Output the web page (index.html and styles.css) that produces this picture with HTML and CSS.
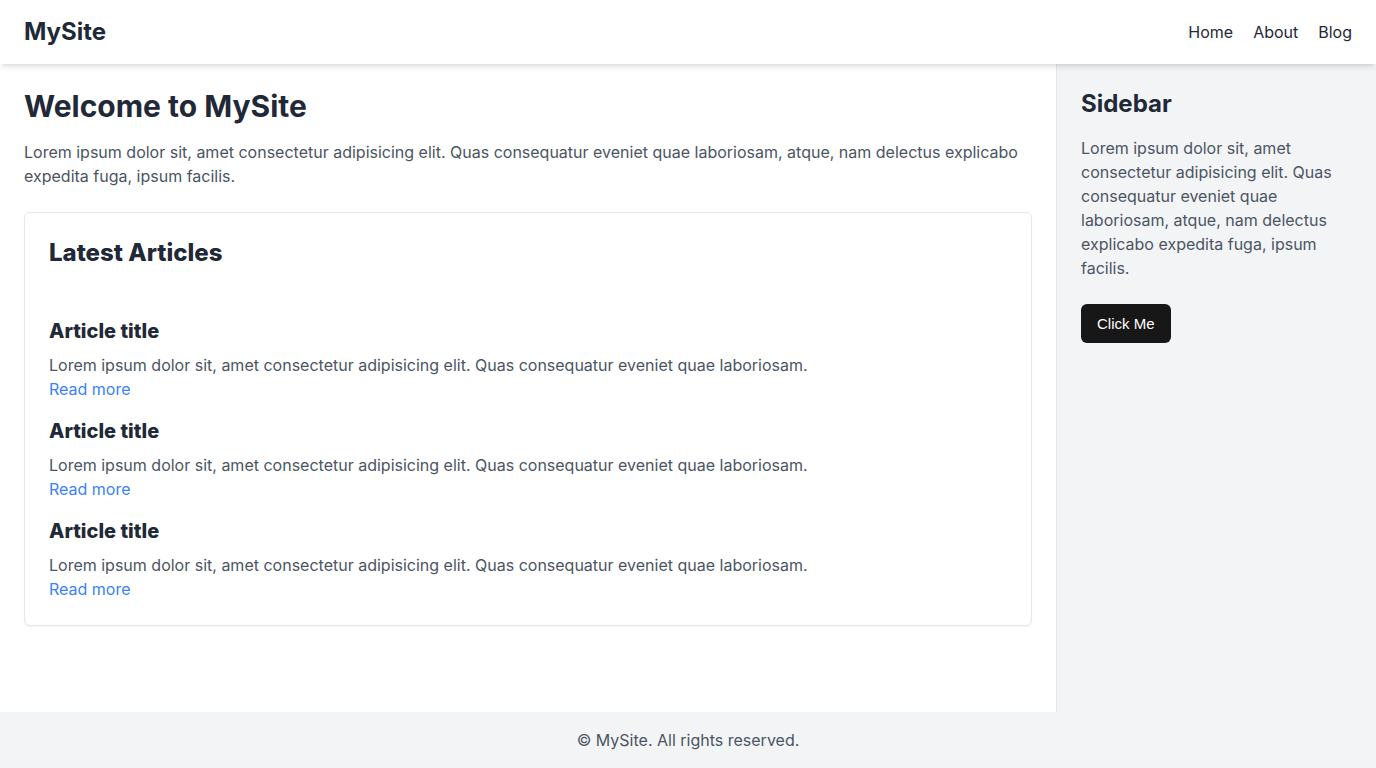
FILE: index.html
```html
<!DOCTYPE html>
<html lang="en">
<head>
<meta charset="utf-8">
<title>MySite</title>
<link rel="stylesheet" href="styles.css">
</head>
<body>
<header class="site-header">
  <div class="logo">MySite</div>
  <nav class="nav">
    <a href="#">Home</a>
    <a href="#">About</a>
    <a href="#">Blog</a>
  </nav>
</header>
<div class="layout">
  <main class="main">
    <h1 class="page-title">Welcome to MySite</h1>
    <p class="lead">Lorem ipsum dolor sit, amet consectetur adipisicing elit. Quas consequatur eveniet quae laboriosam, atque, nam delectus explicabo expedita fuga, ipsum facilis.</p>
    <section class="card">
      <h2 class="card-title">Latest Articles</h2>
      <div class="articles">
        <article class="article">
          <h3 class="article-title">Article title</h3>
          <p class="article-text">Lorem ipsum dolor sit, amet consectetur adipisicing elit. Quas consequatur eveniet quae laboriosam.</p>
          <a class="read-more" href="#">Read more</a>
        </article>
        <article class="article">
          <h3 class="article-title">Article title</h3>
          <p class="article-text">Lorem ipsum dolor sit, amet consectetur adipisicing elit. Quas consequatur eveniet quae laboriosam.</p>
          <a class="read-more" href="#">Read more</a>
        </article>
        <article class="article">
          <h3 class="article-title">Article title</h3>
          <p class="article-text">Lorem ipsum dolor sit, amet consectetur adipisicing elit. Quas consequatur eveniet quae laboriosam.</p>
          <a class="read-more" href="#">Read more</a>
        </article>
      </div>
    </section>
  </main>
  <aside class="sidebar">
    <h2 class="sidebar-title">Sidebar</h2>
    <p class="sidebar-text">Lorem ipsum dolor sit, amet consectetur adipisicing elit. Quas consequatur eveniet quae laboriosam, atque, nam delectus explicabo expedita fuga, ipsum facilis.</p>
    <button class="btn" type="button">Click Me</button>
  </aside>
</div>
<footer class="site-footer">© MySite. All rights reserved.</footer>
</body>
</html>
```
FILE: styles.css
```css
* { box-sizing: border-box; }
html, body { margin: 0; padding: 0; }
body {
  font-family: Inter, "Noto Sans", sans-serif;
  font-size: 16px;
  line-height: 24px;
  color: #1f2937;
  background: #ffffff;
  min-height: 100vh;
  display: flex;
  flex-direction: column;
}
h1, h2, h3, p { margin: 0; }
a { text-decoration: none; }

.site-header {
  height: 64px;
  padding: 0 24px;
  display: flex;
  align-items: center;
  justify-content: space-between;
  background: #ffffff;
  box-shadow: 0 4px 6px -1px rgba(0,0,0,0.1), 0 2px 4px -2px rgba(0,0,0,0.1);
  position: relative;
  z-index: 2;
}
.logo {
  font-size: 24px;
  line-height: 32px;
  font-weight: 700;
  color: #1f2937;
}
.nav { display: flex; gap: 20px; }
.nav a { color: #1f2937; font-size: 16px; line-height: 24px; }

.layout {
  flex: 1;
  display: flex;
}
.main {
  flex: 1;
  padding: 24px;
}
.page-title {
  font-size: 30px;
  line-height: 36px;
  font-weight: 700;
  color: #1f2937;
}
.lead {
  margin-top: 16px;
  color: #4b5563;
}
.card {
  margin-top: 24px;
  border: 1px solid #e5e7eb;
  border-radius: 6px;
  padding: 24px;
  background: #ffffff;
  box-shadow: 0 1px 2px rgba(0,0,0,0.05);
}
.card-title {
  font-size: 24px;
  line-height: 32px;
  font-weight: 800;
  color: #1f2937;
}
.articles {
  margin-top: 48px;
  display: flex;
  flex-direction: column;
  gap: 16px;
}
.article { display: flex; flex-direction: column; align-items: flex-start; }
.article-title {
  font-size: 20px;
  line-height: 28px;
  font-weight: 800;
  color: #1f2937;
}
.article-text {
  margin-top: 8px;
  color: #4b5563;
}
.read-more { color: #3b82f6; }

.sidebar {
  width: 320px;
  flex-shrink: 0;
  background: #f3f4f6;
  border-left: 1px solid #e5e7eb;
  padding: 24px;
}
.sidebar-title {
  font-size: 24px;
  line-height: 32px;
  font-weight: 700;
  color: #1f2937;
}
.sidebar-text {
  margin-top: 16px;
  color: #4b5563;
}
.btn {
  margin-top: 24px;
  background: #171717;
  color: #ffffff;
  border: none;
  border-radius: 6px;
  padding: 11px 16px;
  font-family: "Liberation Sans", Arial, sans-serif;
  font-size: 15px;
  line-height: 17px;
  cursor: pointer;
}

.site-footer {
  height: 56px;
  padding: 16px;
  background: #f3f4f6;
  text-align: center;
  color: #4b5563;
}
```
